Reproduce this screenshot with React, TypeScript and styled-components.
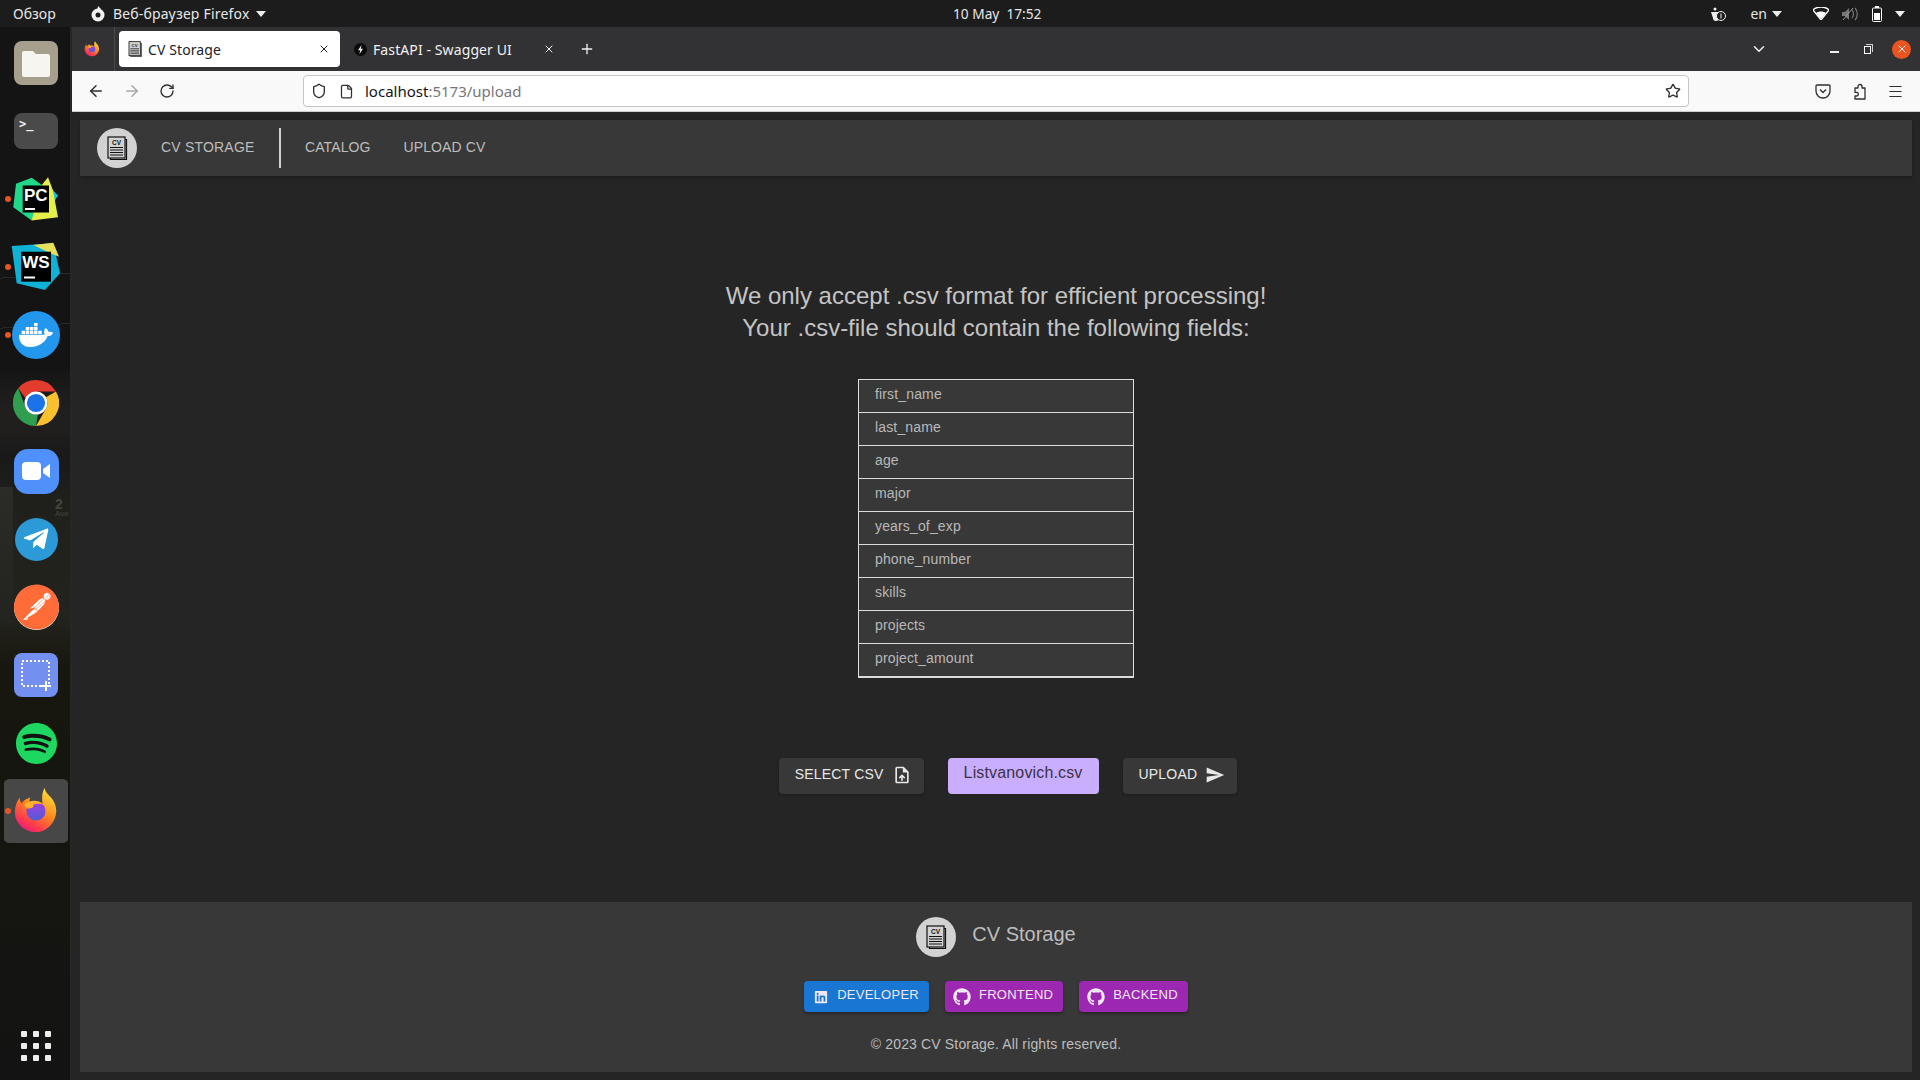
import styled, { createGlobalStyle } from "styled-components";
import {
  ArrowLeft,
  ArrowRight,
  ChevronDown,
  File,
  Menu,
  Plus,
  RotateCw,
  Shield,
  Star,
  X,
} from "lucide-react";
import { FaDocker, FaGithub, FaLinkedin, FaSpotify, FaTelegramPlane } from "react-icons/fa";
import { MdSend, MdUploadFile } from "react-icons/md";
import { SiPostman } from "react-icons/si";

const fields = [
  "first_name",
  "last_name",
  "age",
  "major",
  "years_of_exp",
  "phone_number",
  "skills",
  "projects",
  "project_amount",
];

const GlobalStyle = createGlobalStyle`
  html, body {
    margin: 0;
    height: 100%;
    overflow: hidden;
    background: #252525;
  }
  #root {
    height: 100%;
  }
  * {
    box-sizing: border-box;
  }
`;

const Desktop = styled.div`
  display: flex;
  flex-direction: column;
  width: 1920px;
  height: 1080px;
  font-family: "Liberation Sans", Arial, sans-serif;
`;

const TopBar = styled.div`
  display: grid;
  grid-template-columns: 953px 88px 1fr;
  align-items: center;
  height: 27px;
  background: #1c1c1c;
  color: #e6e6e6;
  font-family: "Noto Sans", sans-serif;
  font-size: 14px;
`;

const TopLeft = styled.div`
  display: flex;
  align-items: center;
  padding-left: 13px;
`;

const Overview = styled.span`
  width: 77px;
`;

const AppName = styled.span`
  margin-left: 7px;
  margin-right: 6px;
  letter-spacing: 0.2px;
`;

const Clock = styled.div`
  text-align: center;
  font-size: 13.7px;
  white-space: pre;
`;

const TopRight = styled.div`
  display: flex;
  align-items: center;
  justify-content: flex-end;
  padding-right: 15px;
`;

const Caret = styled.span<{ $gap?: number }>`
  display: inline-block;
  margin-left: ${(p) => p.$gap ?? 0}px;
  border-left: 5px solid transparent;
  border-right: 5px solid transparent;
  border-top: 6px solid #eeeeee;
`;

const TraySlot = styled.span<{ $left: number }>`
  display: inline-flex;
  align-items: center;
  margin-left: ${(p) => p.$left}px;
`;

const Workspace = styled.div`
  display: flex;
  flex: 1;
  min-height: 0;
`;

const Dock = styled.div`
  position: relative;
  display: flex;
  flex-direction: column;
  align-items: center;
  flex: 0 0 72px;
  padding-top: 2px;
  background:
    linear-gradient(176deg, transparent 0 250px, #2c2a26 250px 251px, transparent 251px 300px, #2a2824 300px 301px, transparent 301px),
    linear-gradient(90deg, #17171700 0 70px, #262626 70px),
    linear-gradient(#2b2b27, #23231f) 0 460px / 13px 135px no-repeat,
    linear-gradient(180deg, #141414 0 340px, #211f1e 380px 400px, #191919 430px, #1f1f1c 470px, #24241e 590px, #17170f 640px, #131313 100%);
`;

const WallpaperSign = styled.span`
  position: absolute;
  left: 55px;
  top: 471px;
  color: #45453f;
  font-size: 8px;
  line-height: 8px;

  & > b {
    display: block;
    font-size: 14px;
    line-height: 12px;
  }
`;

const DockSlot = styled.div<{ $active?: boolean }>`
  position: relative;
  display: flex;
  align-items: center;
  justify-content: center;
  width: 64px;
  height: 68px;
  padding: 2px 0;
  border-radius: 6px;
  background: ${(p) => (p.$active ? "#474747" : "transparent")};
  background-clip: content-box;
`;

const RunningDot = styled.span`
  position: absolute;
  left: 1px;
  top: 31px;
  width: 6px;
  height: 6px;
  border-radius: 50%;
  background: #e95420;
`;

const RoundIcon = styled.div<{ $bg: string; $size?: number; $color?: string }>`
  display: flex;
  align-items: center;
  justify-content: center;
  width: ${(p) => p.$size ?? 46}px;
  height: ${(p) => p.$size ?? 46}px;
  border-radius: 50%;
  background: ${(p) => p.$bg};
  color: ${(p) => p.$color ?? "#ffffff"};
`;

const SquareIcon = styled.div<{ $bg: string; $w?: number; $h?: number; $radius?: number }>`
  position: relative;
  display: flex;
  align-items: center;
  justify-content: center;
  width: ${(p) => p.$w ?? 44}px;
  height: ${(p) => p.$h ?? 44}px;
  border-radius: ${(p) => p.$radius ?? 8}px;
  background: ${(p) => p.$bg};
  color: #ffffff;
`;

const TerminalPrompt = styled.span`
  position: absolute;
  left: 5px;
  top: 4px;
  color: #f2f2f2;
  font-family: "DejaVu Sans Mono", monospace;
  font-size: 12px;
  font-weight: 700;
`;

const AppGrid = styled.div`
  display: grid;
  grid-template-columns: repeat(3, 6px);
  gap: 6px;
  margin-top: auto;
  margin-bottom: 19px;
`;

const GridDot = styled.span`
  width: 6px;
  height: 6px;
  border-radius: 1px;
  background: #eeeeee;
`;

const Browser = styled.div`
  display: flex;
  flex-direction: column;
  flex: 1;
  min-width: 0;
`;

const TabStrip = styled.div`
  display: flex;
  align-items: center;
  height: 44px;
  background: #323234;
  color: #f1f1f1;
  font-family: "Noto Sans", sans-serif;
  font-size: 14px;
  letter-spacing: 0.1px;
`;

const FirefoxMenu = styled.div`
  display: flex;
  align-items: center;
  justify-content: center;
  width: 43px;
  height: 44px;
  padding-right: 3px;
  border-right: 1px solid #4a4a4c;
`;

const TabList = styled.div`
  display: flex;
  gap: 4px;
  margin-left: 4px;
`;

const Tab = styled.div<{ $active?: boolean }>`
  display: flex;
  align-items: center;
  gap: 5px;
  width: 221px;
  height: 36px;
  padding: 0 10px 0 8px;
  border-radius: 4px;
  background: ${(p) => (p.$active ? "#ffffff" : "transparent")};
  color: ${(p) => (p.$active ? "#222226" : "#f1f1f1")};
`;

const TabTitle = styled.span`
  flex: 1;
`;

const TabFavicon = styled.span`
  display: flex;
  flex: 0 0 16px;
  align-items: center;
  justify-content: center;
`;

const NewTab = styled.span`
  display: flex;
  margin-left: 14px;
`;

const WindowControls = styled.div`
  display: flex;
  align-items: center;
  margin-left: auto;
  padding-right: 9px;
`;

const WindowButton = styled.span<{ $left: number }>`
  display: flex;
  margin-left: ${(p) => p.$left}px;
`;

const MinimizeBar = styled.span`
  display: block;
  width: 9px;
  height: 2px;
  margin-top: 5px;
  background: #f1f1f1;
`;

const RestoreIcon = styled.span`
  position: relative;
  display: block;
  width: 7px;
  height: 8px;
  margin-top: 2px;
  border: 1px solid #ffffff;

  &::before {
    content: "";
    position: absolute;
    left: 1px;
    top: -3px;
    width: 6px;
    height: 7px;
    border-top: 1px solid #cfcfcf;
    border-right: 1px solid #cfcfcf;
  }
`;

const CloseButton = styled.span`
  display: flex;
  align-items: center;
  justify-content: center;
  width: 19px;
  height: 19px;
  margin-left: 21px;
  border-radius: 50%;
  background: #e95420;
`;

const NavBar = styled.div`
  display: flex;
  align-items: center;
  height: 41px;
  background: #f9f9fa;
  border-bottom: 1px solid #cfcfd1;
  color: #2f2f33;
`;

const NavIcon = styled.span<{ $left: number; $muted?: boolean }>`
  display: flex;
  margin-left: ${(p) => p.$left}px;
  color: ${(p) => (p.$muted ? "#a8a8aa" : "#2f2f33")};
`;

const UrlBar = styled.div`
  display: flex;
  align-items: center;
  width: 1386px;
  height: 32px;
  margin-left: 128px;
  padding: 0 7px;
  background: #ffffff;
  border: 1px solid #c6c6c8;
  border-radius: 4px;
  font-family: "Noto Sans", sans-serif;
  font-size: 15px;
`;

const UrlHost = styled.span`
  margin-left: 11px;
  color: #15141a;
`;

const UrlPath = styled.span`
  color: #77767c;
`;

const UrlStar = styled.span`
  display: flex;
  margin-left: auto;
`;

const Page = styled.div`
  display: flex;
  flex-direction: column;
  flex: 1;
  min-height: 0;
  padding: 8px;
  background: #252525;
`;

const Header = styled.header`
  display: flex;
  align-items: center;
  flex: 0 0 56px;
  padding-left: 17px;
  background: #383838;
  box-shadow: 0 2px 4px rgba(0, 0, 0, 0.25);
  color: #bdbdbd;
  font-size: 14px;
`;

const LogoCircle = styled.div`
  display: flex;
  align-items: center;
  justify-content: center;
  width: 40px;
  height: 40px;
  border-radius: 50%;
  background: #d2d2d2;
`;

const Brand = styled.span`
  width: 118px;
  margin-left: 24px;
  margin-bottom: 3px;
  letter-spacing: 0.2px;
`;

const HeaderDivider = styled.span`
  width: 2px;
  height: 40px;
  background: #d0d0d0;
`;

const NavLink = styled.a<{ $left: number }>`
  margin-left: ${(p) => p.$left}px;
  margin-bottom: 3px;
  color: #bdbdbd;
  letter-spacing: 0.1px;
`;

const Main = styled.main`
  display: flex;
  flex-direction: column;
  align-items: center;
  flex: 1;
  padding-top: 104px;
`;

const Headline = styled.h1`
  margin: 0;
  color: #c4c4c4;
  font-size: 24px;
  font-weight: 400;
  line-height: 32px;
  text-align: center;
`;

const FieldTable = styled.div`
  width: 276px;
  margin-top: 35px;
  border: 1px solid #dcdcdc;
  border-bottom-width: 2px;
`;

const FieldRow = styled.div`
  height: 32px;
  padding: 5px 16px 0;
  background: #383838;
  color: #b8b8b8;
  font-size: 14px;
  letter-spacing: 0.15px;
  line-height: 18px;

  & + & {
    height: 33px;
    border-top: 1px solid #dcdcdc;
  }
`;

const Actions = styled.div`
  display: flex;
  gap: 24px;
  margin-top: 80px;
  margin-left: 24px;
`;

const ActionButton = styled.div`
  display: flex;
  align-items: center;
  gap: 8px;
  height: 36px;
  padding: 0 12px 5px 16px;
  border-radius: 4px;
  background: #383838;
  box-shadow: 0 1px 3px rgba(0, 0, 0, 0.3);
  color: #e8e8e8;
  font-size: 14px;
  letter-spacing: 0.2px;
`;

const IconNudge = styled.span`
  display: flex;
  margin-top: 3px;
`;

const FileName = styled.div`
  display: flex;
  align-items: center;
  height: 36px;
  padding: 0 16px 6px;
  border-radius: 4px;
  background: #c9aeff;
  color: #3a3345;
  font-size: 16px;
  letter-spacing: 0.15px;
`;

const Footer = styled.footer`
  display: flex;
  flex-direction: column;
  align-items: center;
  flex: 0 0 170px;
  padding-top: 15px;
  background: #383838;
  color: #bdbdbd;
`;

const FooterBrand = styled.div`
  display: flex;
  align-items: center;
  gap: 16px;
  font-size: 20px;
`;

const FooterTitle = styled.span`
  margin-bottom: 5px;
`;

const FooterLinks = styled.div`
  display: flex;
  gap: 16px;
  margin-top: 24px;
`;

const FooterLink = styled.a<{ $bg: string; $pad: number; $gap: number }>`
  display: flex;
  align-items: center;
  gap: ${(p) => p.$gap}px;
  height: 31px;
  padding: 0 10px 0 ${(p) => p.$pad}px;
  border-radius: 4px;
  background: ${(p) => p.$bg};
  box-shadow: 0 2px 3px rgba(0, 0, 0, 0.3);
  color: #f0e8f2;
  font-size: 13px;
  letter-spacing: 0.25px;
`;

const FooterLinkText = styled.span`
  margin-bottom: 4px;
`;

const Copyright = styled.p`
  margin: 23px 0 0;
  font-size: 14px;
  letter-spacing: 0.15px;
  line-height: 18px;
`;

const CvIcon = ({ size }: { size: number }) => (
  <svg width={size} height={size} viewBox="0 0 24 24">
    <path d="M20 3.500h1.500v20h-16V22" fill="none" stroke="#111" strokeWidth="1.200" />
    <rect x="3" y="1" width="17" height="21" fill="#d2d2d2" stroke="#111" strokeWidth="1.200" />
    <text x="11.500" y="8.500" fontFamily="Liberation Sans" fontSize="6.500" fontWeight="700" textAnchor="middle" fill="#111">
      CV
    </text>
    <path d="M5 11.500h13M5 14h13M5 16.500h13M5 19h13" stroke="#111" strokeWidth="1" />
  </svg>
);

const FirefoxIcon = ({ size }: { size: number }) => (
  <svg width={size} height={size} viewBox="0 1 48 48">
    <defs>
      <linearGradient id="ffBody" x1="0.8" y1="0" x2="0.2" y2="1">
        <stop offset="0" stopColor="#ffe53b" />
        <stop offset="0.45" stopColor="#ff8a1f" />
        <stop offset="0.8" stopColor="#ff3750" />
        <stop offset="1" stopColor="#e31587" />
      </linearGradient>
      <linearGradient id="ffGlobe" x1="0.5" y1="0" x2="0.5" y2="1">
        <stop offset="0" stopColor="#a63fdd" />
        <stop offset="1" stopColor="#4f5bd8" />
      </linearGradient>
    </defs>
    <path
      d="M33 1c1 6 6 8 9 13 4 7 4 14 1 20-4 8-11 13-19 13C12 47 2 38 2 26c0-6 2-11 5-15 0 3 1 5 2 6 2-3 5-5 9-6-1 2-1 4 0 5 5-1 10 0 13 2-1-6-1-12 2-17z"
      fill="url(#ffBody)"
    />
    <circle cx="24" cy="25" r="10" fill="url(#ffGlobe)" />
    <path d="M12 18c6-5 15-5 21 1-5-2-9-2-12 0 1 2-2 4-6 3-1 0-3-2-3-4z" fill="#ffb12b" />
  </svg>
);

const ChromeIcon = () => (
  <svg width="46" height="46" viewBox="0 0 48 48">
    <path d="M24 0a24 24 0 0 1 20.800 12H24a12 12 0 0 0-11 7L5.500 8.500A24 24 0 0 1 24 0z" fill="#e33b2e" />
    <path d="M44.800 12A24 24 0 0 1 24 48l10.400-18A12 12 0 0 0 34.400 18z" fill="#fbc02d" />
    <path d="M24 48A24 24 0 0 1 5.500 8.500L13.600 30A12 12 0 0 0 26 35.800z" fill="#2f9e4f" />
    <circle cx="24" cy="24" r="12" fill="#ffffff" />
    <circle cx="24" cy="24" r="9.500" fill="#1a73e8" />
  </svg>
);

const PyCharmIcon = () => (
  <svg width="50" height="50" viewBox="0 -1.500 50 50">
    <path d="M39 11.700L47 20l-5 8z" fill="#14c2d6" />
    <path d="M2.300 31.700L5 8.300 20.700 2.300 34 11.700 20.700 45z" fill="#21d789" />
    <path d="M20.700 45L47 41.700 42 15 37 1.700 29 11.700z" fill="#e6ee4a" />
    <rect x="11.700" y="10" width="26.300" height="27" fill="#000000" />
    <text x="24.800" y="25.700" fontFamily="Liberation Sans" fontSize="17" fontWeight="700" textAnchor="middle" fill="#ffffff">
      PC
    </text>
    <rect x="14" y="32.500" width="10" height="2" fill="#ffffff" />
  </svg>
);

const WebStormIcon = () => (
  <svg width="50" height="50" viewBox="0 0 50 50">
    <path d="M0.700 4L42.300 1.300 49 31.300 34 48 5.700 41.300z" fill="#0fb2d6" />
    <path d="M22.300 3L42.300 0.700 48 14.700 39 11z" fill="#e8e05a" />
    <rect x="10" y="9.700" width="30" height="30" fill="#000000" />
    <text x="25" y="25.700" fontFamily="Liberation Sans" fontSize="17" fontWeight="700" textAnchor="middle" fill="#ffffff">
      WS
    </text>
    <rect x="13" y="34.500" width="11" height="2" fill="#ffffff" />
  </svg>
);

const ScreenshotIcon = () => (
  <svg width="34" height="34" viewBox="0 0 34 34">
    <rect x="3" y="3" width="27" height="25" fill="none" stroke="#ffffff" strokeWidth="2" strokeDasharray="2 2" />
    <path d="M27 23v10M22 28h10" stroke="#ffffff" strokeWidth="2" />
  </svg>
);

const PuzzleIcon = () => (
  <svg width="16" height="17" viewBox="0 0 16 17">
    <path
      d="M3 5h3V3.500a2 2 0 1 1 4 0V5h3v11H3v-3h1.500a1.800 1.800 0 0 0 0-3.600H3z"
      fill="none"
      stroke="#2f2f33"
      strokeWidth="1.300"
      strokeLinejoin="round"
    />
  </svg>
);

export default function App() {
  return (
    <>
      <GlobalStyle />
      <Desktop>
        <TopBar>
          <TopLeft>
            <Overview>Обзор</Overview>
            <svg width="16" height="16" viewBox="0 0 16 16">
              <circle cx="8" cy="9" r="6.500" fill="#f2f2f2" />
              <circle cx="8" cy="9" r="2.500" fill="#1c1c1c" />
              <path d="M8 0l3 3-4 2z" fill="#f2f2f2" />
            </svg>
            <AppName>Веб-браузер Firefox</AppName>
            <Caret />
          </TopLeft>
          <Clock>10 May  17:52</Clock>
          <TopRight>
            <svg width="16" height="14" viewBox="0 0 16 14">
              <path d="M1 5h8v6a3 3 0 0 1-6 0z" fill="#eeeeee" />
              <circle cx="11" cy="9" r="4.500" fill="#1c1c1c" stroke="#eeeeee" />
              <path d="M11 6.500v5" stroke="#eeeeee" />
              <circle cx="5" cy="2" r="1.500" fill="#eeeeee" />
            </svg>
            <TraySlot $left={24}>en</TraySlot>
            <Caret $gap={5} />
            <TraySlot $left={31}>
              <svg width="16" height="13" viewBox="0 0 16 13">
                <path d="M0 3c4-4 12-4 16 0L8 13z" fill="none" stroke="#ffffff" strokeWidth="1.300" />
                <path d="M3 6c3-2 7-2 10 0L8 12z" fill="#ffffff" />
              </svg>
            </TraySlot>
            <TraySlot $left={13}>
              <svg width="16" height="14" viewBox="0 0 16 14">
                <path d="M0 5h3l4-4v12l-4-4H0z" fill="#777777" />
                <path d="M10 3c2 2 2 6 0 8M13 1c3 3 3 9 0 12" fill="none" stroke="#777777" strokeWidth="1.200" />
                <path d="M1 13L11 1" stroke="#999999" />
              </svg>
            </TraySlot>
            <TraySlot $left={14}>
              <svg width="10" height="16" viewBox="0 0 10 16">
                <rect x="0.500" y="2" width="9" height="13.500" rx="1" fill="none" stroke="#ffffff" />
                <rect x="3" y="0" width="4" height="2" fill="#ffffff" />
                <rect x="2" y="7" width="6" height="7" fill="#ffffff" />
              </svg>
            </TraySlot>
            <Caret $gap={13} />
          </TopRight>
        </TopBar>
        <Workspace>
          <Dock>
            <WallpaperSign>
              <b>2</b>
              Ave
            </WallpaperSign>
            <DockSlot>
              <SquareIcon $bg="#a69f8e">
                <svg width="32" height="32" viewBox="0 0 32 32">
                  <path d="M2 6a2 2 0 0 1 2-2h9l3 3h12a2 2 0 0 1 2 2v19a2 2 0 0 1-2 2H4a2 2 0 0 1-2-2z" fill="#f7f5f0" />
                </svg>
              </SquareIcon>
            </DockSlot>
            <DockSlot>
              <SquareIcon $bg="#4a4a4a" $h={36}>
                <TerminalPrompt>&gt;_</TerminalPrompt>
              </SquareIcon>
            </DockSlot>
            <DockSlot>
              <RunningDot />
              <PyCharmIcon />
            </DockSlot>
            <DockSlot>
              <RunningDot />
              <WebStormIcon />
            </DockSlot>
            <DockSlot>
              <RunningDot />
              <RoundIcon $bg="#2396ed" $size={48}>
                <FaDocker size={34} />
              </RoundIcon>
            </DockSlot>
            <DockSlot>
              <ChromeIcon />
            </DockSlot>
            <DockSlot>
              <SquareIcon $bg="#4f90fb" $w={45} $h={45} $radius={14}>
                <svg width="28" height="18" viewBox="0 0 28 18">
                  <rect x="0" y="0" width="19" height="18" rx="4" fill="#ffffff" />
                  <path d="M21 7l7-5v14l-7-5z" fill="#ffffff" />
                </svg>
              </SquareIcon>
            </DockSlot>
            <DockSlot>
              <RoundIcon $bg="#2c9ad6" $size={43}>
                <FaTelegramPlane size={28} />
              </RoundIcon>
            </DockSlot>
            <DockSlot>
              <RoundIcon $bg="#ffffff" $color="#ff6c37" $size={45}>
                <SiPostman size={46} />
              </RoundIcon>
            </DockSlot>
            <DockSlot>
              <SquareIcon $bg="#7390f0">
                <ScreenshotIcon />
              </SquareIcon>
            </DockSlot>
            <DockSlot>
              <RoundIcon $bg="#111111" $color="#1ed760" $size={41}>
                <FaSpotify size={43} />
              </RoundIcon>
            </DockSlot>
            <DockSlot $active>
              <RunningDot />
              <FirefoxIcon size={46} />
            </DockSlot>
            <AppGrid>
              {Array.from({ length: 9 }).map((_, i) => (
                <GridDot key={i} />
              ))}
            </AppGrid>
          </Dock>
          <Browser>
            <TabStrip>
              <FirefoxMenu>
                <FirefoxIcon size={16} />
              </FirefoxMenu>
              <TabList>
                <Tab $active>
                  <TabFavicon>
                    <CvIcon size={16} />
                  </TabFavicon>
                  <TabTitle>CV Storage</TabTitle>
                  <X size={12} />
                </Tab>
                <Tab>
                  <TabFavicon>
                    <svg width="13" height="13" viewBox="0 0 13 13">
                      <circle cx="6.500" cy="6.500" r="6.500" fill="#0a0a0a" />
                      <path d="M7.500 2L4 7.200h2.200L5.500 11 9 5.800H6.800z" fill="#eeeeee" />
                    </svg>
                  </TabFavicon>
                  <TabTitle>FastAPI - Swagger UI</TabTitle>
                  <X size={12} />
                </Tab>
              </TabList>
              <NewTab>
                <Plus size={16} />
              </NewTab>
              <WindowControls>
                <ChevronDown size={18} />
                <WindowButton $left={62}>
                  <MinimizeBar />
                </WindowButton>
                <WindowButton $left={25}>
                  <RestoreIcon />
                </WindowButton>
                <CloseButton>
                  <X size={12} color="#ffffff" />
                </CloseButton>
              </WindowControls>
            </TabStrip>
            <NavBar>
              <NavIcon $left={15}>
                <ArrowLeft size={18} />
              </NavIcon>
              <NavIcon $left={18} $muted>
                <ArrowRight size={18} />
              </NavIcon>
              <NavIcon $left={18}>
                <RotateCw size={16} />
              </NavIcon>
              <UrlBar>
                <Shield size={16} />
                <NavIcon $left={12}>
                  <File size={15} />
                </NavIcon>
                <UrlHost>localhost</UrlHost>
                <UrlPath>:5173/upload</UrlPath>
                <UrlStar>
                  <Star size={16} />
                </UrlStar>
              </UrlBar>
              <NavIcon $left={126}>
                <svg width="16" height="16" viewBox="0 0 16 16">
                  <path d="M2 2h12a1 1 0 0 1 1 1v5a7 7 0 0 1-14 0V3a1 1 0 0 1 1-1z" fill="none" stroke="#2f2f33" strokeWidth="1.300" />
                  <path d="M5 6.500l3 3 3-3" fill="none" stroke="#2f2f33" strokeWidth="1.300" />
                </svg>
              </NavIcon>
              <NavIcon $left={21}>
                <PuzzleIcon />
              </NavIcon>
              <NavIcon $left={19}>
                <Menu size={17} strokeWidth={1.500} />
              </NavIcon>
            </NavBar>
            <Page>
              <Header>
                <LogoCircle>
                  <CvIcon size={24} />
                </LogoCircle>
                <Brand>CV STORAGE</Brand>
                <HeaderDivider />
                <NavLink $left={24}>CATALOG</NavLink>
                <NavLink $left={33}>UPLOAD CV</NavLink>
              </Header>
              <Main>
                <Headline>
                  We only accept .csv format for efficient processing!
                  <br />
                  Your .csv-file should contain the following fields:
                </Headline>
                <FieldTable>
                  {fields.map((field) => (
                    <FieldRow key={field}>{field}</FieldRow>
                  ))}
                </FieldTable>
                <Actions>
                  <ActionButton>
                    SELECT CSV
                    <IconNudge>
                      <MdUploadFile size={20} />
                    </IconNudge>
                  </ActionButton>
                  <FileName>Listvanovich.csv</FileName>
                  <ActionButton>
                    UPLOAD
                    <IconNudge>
                      <MdSend size={20} />
                    </IconNudge>
                  </ActionButton>
                </Actions>
              </Main>
              <Footer>
                <FooterBrand>
                  <LogoCircle>
                    <CvIcon size={24} />
                  </LogoCircle>
                  <FooterTitle>CV Storage</FooterTitle>
                </FooterBrand>
                <FooterLinks>
                  <FooterLink $bg="#1976d2" $pad={10} $gap={9}>
                    <FaLinkedin size={14} />
                    <FooterLinkText>DEVELOPER</FooterLinkText>
                  </FooterLink>
                  <FooterLink $bg="#9c27b0" $pad={8} $gap={8}>
                    <FaGithub size={18} />
                    <FooterLinkText>FRONTEND</FooterLinkText>
                  </FooterLink>
                  <FooterLink $bg="#9c27b0" $pad={8} $gap={8}>
                    <FaGithub size={18} />
                    <FooterLinkText>BACKEND</FooterLinkText>
                  </FooterLink>
                </FooterLinks>
                <Copyright>© 2023 CV Storage. All rights reserved.</Copyright>
              </Footer>
            </Page>
          </Browser>
        </Workspace>
      </Desktop>
    </>
  );
}
